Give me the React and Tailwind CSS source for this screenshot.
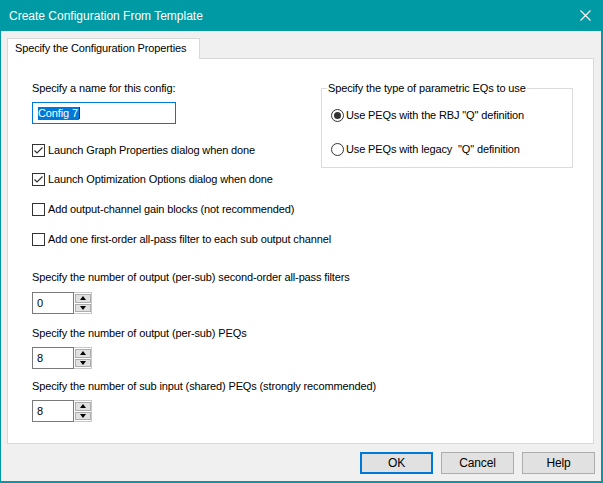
import React from "react";

const Check = ({ checked, label }) => (
  <div className="flex items-center h-[16px]">
    <div className="w-[13px] h-[13px] border border-[#333333] bg-white flex items-center justify-center">
      {checked && (
        <svg width="11" height="11" viewBox="0 0 11 11">
          <polyline points="1.5,5.5 4,8 9.5,2.5" fill="none" stroke="#333333" strokeWidth="1.2" />
        </svg>
      )}
    </div>
    <span className="ml-[3px] leading-[14px]">{label}</span>
  </div>
);

const Radio = ({ checked, label }) => (
  <div className="flex items-center h-[16px]">
    <div className="w-[13px] h-[13px] rounded-full border border-[#333333] bg-white flex items-center justify-center">
      {checked && <div className="w-[7px] h-[7px] rounded-full bg-[#333333]"></div>}
    </div>
    <span className="ml-[2px] leading-[14px] whitespace-pre">{label}</span>
  </div>
);

const Spin = ({ value }) => (
  <div className="flex h-[22px] w-[60px]">
    <div className="w-[42px] h-[22px] border border-[#7a7a7a] bg-white pl-[4px] leading-[20px]">{value}</div>
    <div className="w-[18px] h-[22px] border border-l-0 border-[#c8c8c8] bg-white flex flex-col justify-center items-center gap-[1px] py-[1px]">
      <div className="w-[16px] h-[9px] bg-[#e1e1e1] border border-[#adadad] flex items-center justify-center">
        <svg width="6" height="4" viewBox="0 0 6 4"><polygon points="0,4 6,4 3,0" fill="#000" /></svg>
      </div>
      <div className="w-[16px] h-[9px] bg-[#e1e1e1] border border-[#adadad] flex items-center justify-center">
        <svg width="6" height="4" viewBox="0 0 6 4"><polygon points="0,0 6,0 3,4" fill="#000" /></svg>
      </div>
    </div>
  </div>
);

const Button = ({ children, primary }) => (
  <button
    className={`w-[73px] h-[22px] bg-[#e1e1e1] text-[12px] leading-[18px] ${
      primary ? "border-2 border-[#0078d7]" : "border border-[#adadad]"
    }`}
  >
    {children}
  </button>
);

export default function App() {
  return (
    <div className="w-[603px] h-[483px] flex flex-col bg-[#f0f0f0] border-l border-r-2 border-b-2 border-[#009aa4] font-['Liberation_Sans',Arial,sans-serif] text-[11px] tracking-[-0.13px] text-black">
      {/* Title bar */}
      <div className="h-[31px] shrink-0 bg-[#009aa4] flex items-center justify-between pl-[8px] pr-[10px]">
        <span className="text-white text-[12px] tracking-normal">Create Configuration From Template</span>
        <svg width="11" height="11" viewBox="0 0 11 11">
          <path d="M0.5 0.5 L10.5 10.5 M10.5 0.5 L0.5 10.5" stroke="#ffffff" strokeWidth="1.1" />
        </svg>
      </div>

      <div className="flex flex-col pl-[6px]">
        {/* Tab */}
        <div className="mt-[7px] flex">
          <div className="relative z-10 -mb-px h-[21px] w-[193px] bg-white border border-b-0 border-[#d9d9d9] pl-[7px] leading-[19px]">
            Specify the Configuration Properties
          </div>
        </div>

        {/* Panel */}
        <div className="h-[386px] mr-[7px] bg-white border border-[#d9d9d9] pl-[24px] pt-[22px]">
          <div className="flex">
            <div className="w-[289px]">
              <div className="h-[14px] leading-[14px]">Specify a name for this config:</div>
              <div className="mt-[7px] w-[144px] h-[22px] border border-[#0078d7] pl-[5px] flex items-center">
                <span className="inline-block bg-[#0078d7] text-white leading-[13px] pr-[1px]">Config 7</span>
                <span className="inline-block w-px h-[12px] bg-[#333333]"></span>
              </div>
              <div className="mt-[18px]">
                <Check checked label="Launch Graph Properties dialog when done" />
              </div>
              <div className="mt-[13px]">
                <Check checked label="Launch Optimization Options dialog when done" />
              </div>
            </div>
            <fieldset className="w-[252px] h-[87px] border border-[#dcdcdc] pl-[5px] pt-[12px] pb-[10px]">
              <legend className="px-[1px] leading-[14px]">Specify the type of parametric EQs to use</legend>
              <div className="ml-[4px]">
                <Radio checked label={'Use PEQs with the RBJ "Q" definition'} />
              </div>
              <div className="ml-[4px] mt-[18px]">
                <Radio label={'Use PEQs with legacy  "Q" definition'} />
              </div>
            </fieldset>
          </div>

          <div className="mt-[14px]">
            <Check label="Add output-channel gain blocks (not recommended)" />
          </div>
          <div className="mt-[14px]">
            <Check label="Add one first-order all-pass filter to each sub output channel" />
          </div>

          <div className="mt-[23px] h-[14px] leading-[14px]">
            Specify the number of output (per-sub) second-order all-pass filters
          </div>
          <div className="mt-[8px]">
            <Spin value="0" />
          </div>

          <div className="mt-[12px] h-[14px] leading-[14px]">Specify the number of output (per-sub) PEQs</div>
          <div className="mt-[7px]">
            <Spin value="8" />
          </div>

          <div className="mt-[10px] h-[14px] leading-[14px]">
            Specify the number of sub input (shared) PEQs (strongly recommended)
          </div>
          <div className="mt-[7px]">
            <Spin value="8" />
          </div>
        </div>

        {/* Buttons */}
        <div className="mt-[8px] flex justify-end gap-[8px] pr-[6px]">
          <Button primary>OK</Button>
          <Button>Cancel</Button>
          <Button>Help</Button>
        </div>
      </div>
    </div>
  );
}
